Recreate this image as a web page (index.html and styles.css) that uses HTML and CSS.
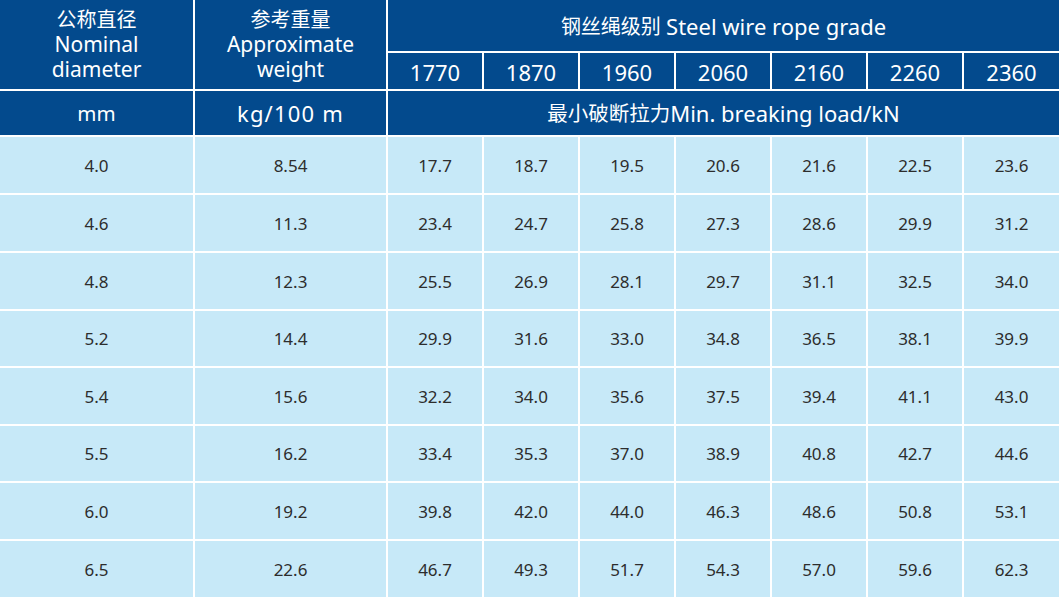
FILE: index.html
```html
<!DOCTYPE html>
<html lang="zh">
<head>
<meta charset="utf-8">
<title>Steel wire rope grade</title>
<link rel="stylesheet" href="styles.css">
</head>
<body>
<div class="table">
  <div class="th span-rows"><span>公称直径</span><span>Nominal</span><span>diameter</span></div>
  <div class="th span-rows"><span>参考重量</span><span>Approximate</span><span>weight</span></div>
  <div class="th span-grades title">钢丝绳级别 <span class="latin">Steel wire rope grade</span></div>
  <div class="th grade">1770</div>
  <div class="th grade">1870</div>
  <div class="th grade">1960</div>
  <div class="th grade">2060</div>
  <div class="th grade">2160</div>
  <div class="th grade">2260</div>
  <div class="th grade">2360</div>
  <div class="th unit">mm</div>
  <div class="th unit wide">kg/100 m</div>
  <div class="th unit span-grades">最小破断拉力<span class="latin">Min. breaking load/kN</span></div>

  <div class="td">4.0</div><div class="td">8.54</div><div class="td">17.7</div><div class="td">18.7</div><div class="td">19.5</div><div class="td">20.6</div><div class="td">21.6</div><div class="td">22.5</div><div class="td">23.6</div>
  <div class="td">4.6</div><div class="td">11.3</div><div class="td">23.4</div><div class="td">24.7</div><div class="td">25.8</div><div class="td">27.3</div><div class="td">28.6</div><div class="td">29.9</div><div class="td">31.2</div>
  <div class="td">4.8</div><div class="td">12.3</div><div class="td">25.5</div><div class="td">26.9</div><div class="td">28.1</div><div class="td">29.7</div><div class="td">31.1</div><div class="td">32.5</div><div class="td">34.0</div>
  <div class="td">5.2</div><div class="td">14.4</div><div class="td">29.9</div><div class="td">31.6</div><div class="td">33.0</div><div class="td">34.8</div><div class="td">36.5</div><div class="td">38.1</div><div class="td">39.9</div>
  <div class="td">5.4</div><div class="td">15.6</div><div class="td">32.2</div><div class="td">34.0</div><div class="td">35.6</div><div class="td">37.5</div><div class="td">39.4</div><div class="td">41.1</div><div class="td">43.0</div>
  <div class="td">5.5</div><div class="td">16.2</div><div class="td">33.4</div><div class="td">35.3</div><div class="td">37.0</div><div class="td">38.9</div><div class="td">40.8</div><div class="td">42.7</div><div class="td">44.6</div>
  <div class="td">6.0</div><div class="td">19.2</div><div class="td">39.8</div><div class="td">42.0</div><div class="td">44.0</div><div class="td">46.3</div><div class="td">48.6</div><div class="td">50.8</div><div class="td">53.1</div>
  <div class="td">6.5</div><div class="td">22.6</div><div class="td">46.7</div><div class="td">49.3</div><div class="td">51.7</div><div class="td">54.3</div><div class="td">57.0</div><div class="td">59.6</div><div class="td">62.3</div>
</div>
</body>
</html>
```
FILE: styles.css
```css
html, body {
  margin: 0;
  padding: 0;
  background: #ffffff;
}
body {
  font-family: "Noto Sans", "Noto Sans CJK SC", sans-serif;
}
.table {
  display: grid;
  width: 1059px;
  grid-template-columns: 193px 191px repeat(6, 94px) 95px;
  grid-template-rows: 51px 36px 44px 56px 56px 56px 55px 56px 55px 56px 56px;
  gap: 2px;
  background: #ffffff;
}
.th {
  background: #034a8d;
  color: #ffffff;
  display: flex;
  align-items: center;
  justify-content: center;
  font-size: 21px;
  line-height: 25px;
  white-space: pre;
}
.span-rows {
  grid-row: span 2;
  flex-direction: column;
}
.span-rows span {
  display: block;
  height: 25px;
}
.span-rows span:first-child {
  font-size: 20px;
}
.span-grades {
  grid-column: span 7;
}
.title {
  font-size: 20px;
  padding-top: 2px;
}
.latin {
  font-size: 22px;
}
.grade {
  font-size: 22px;
  padding-top: 2px;
}
.unit {
  font-size: 20.5px;
}
.unit.wide {
  font-size: 22px;
  letter-spacing: 1.2px;
}
.td {
  background: #c7e9f8;
  color: #2d2d2d;
  display: flex;
  align-items: center;
  justify-content: center;
  font-size: 17px;
}
```
